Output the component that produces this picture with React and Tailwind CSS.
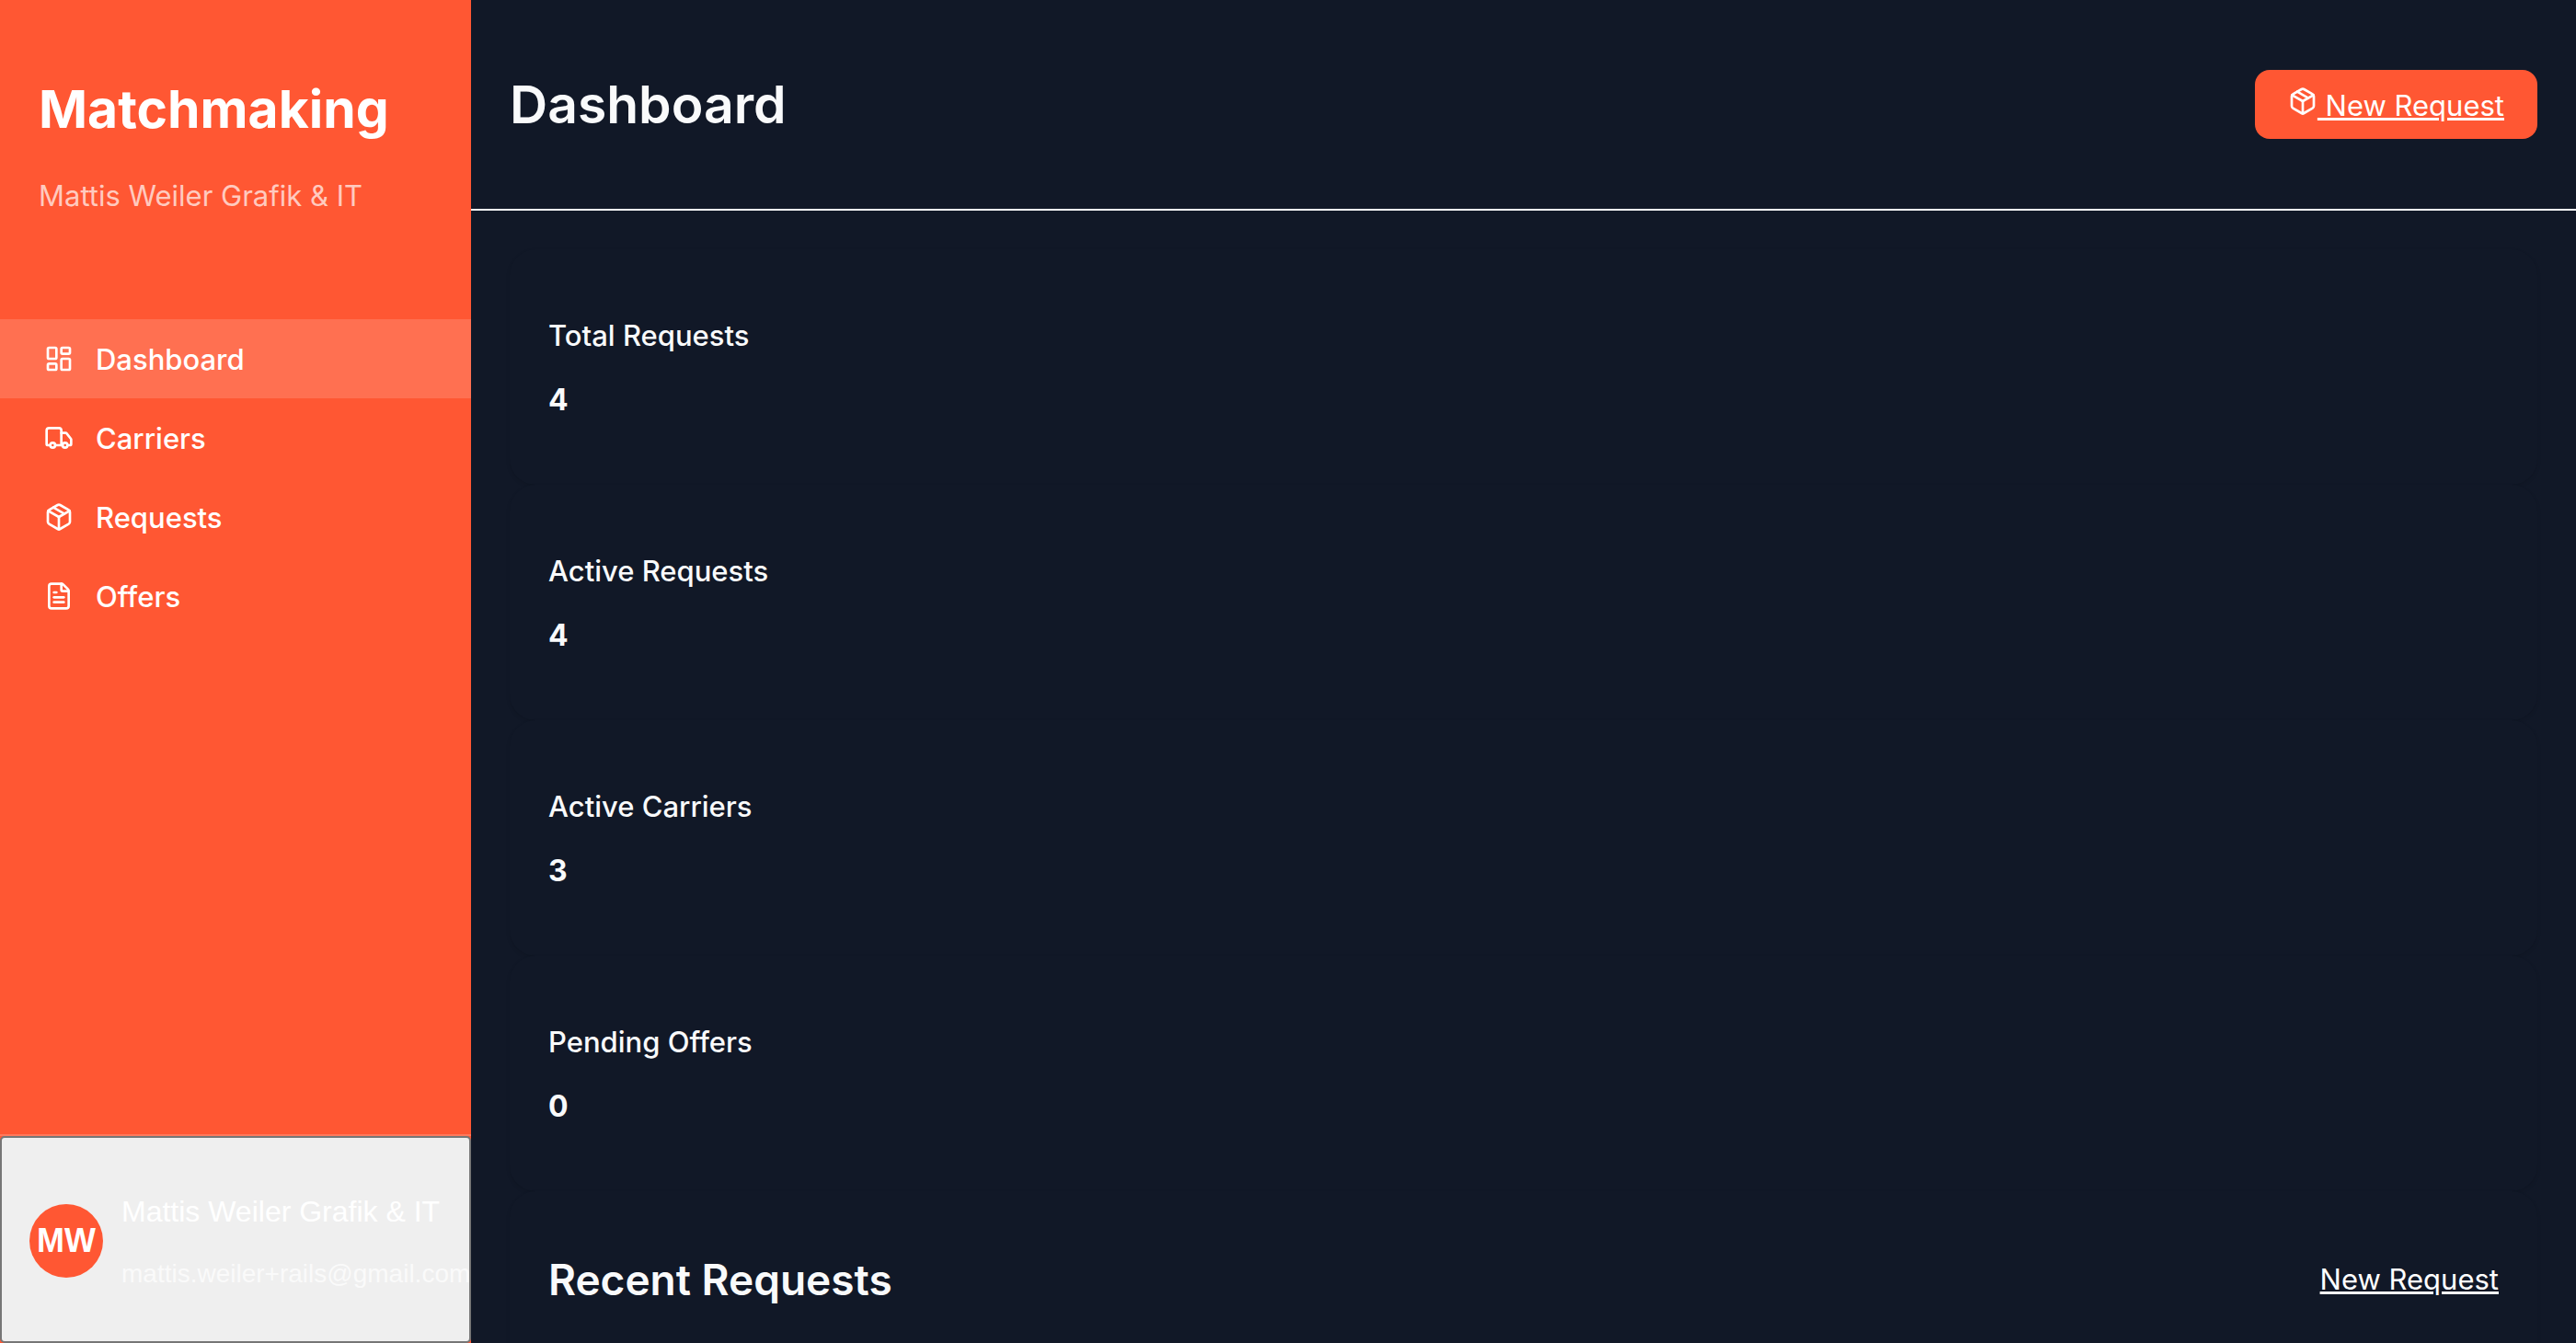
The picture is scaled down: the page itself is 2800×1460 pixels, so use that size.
import { LayoutDashboard, Truck, Package, FileText } from "lucide-react";

const navItems = [
  { label: "Dashboard", Icon: LayoutDashboard, active: true },
  { label: "Carriers", Icon: Truck },
  { label: "Requests", Icon: Package },
  { label: "Offers", Icon: FileText },
];

const stats = [
  { label: "Total Requests", value: 4 },
  { label: "Active Requests", value: 4 },
  { label: "Active Carriers", value: 3 },
  { label: "Pending Offers", value: 0 },
];

function Sidebar() {
  return (
    <aside className="sticky top-0 flex h-screen w-[512px] shrink-0 flex-col bg-[#ff5733] text-white">
      <div className="px-[42px] pt-[83px] pb-[110px]">
        <div className="text-[57px] leading-[72px] font-bold">Matchmaking</div>
        <p className="mt-[34px] leading-[48px] text-white/70">Mattis Weiler Grafik &amp; IT</p>
      </div>
      <nav className="flex flex-1 flex-col">
        {navItems.map(({ label, Icon, active }) => (
          <a
            key={label}
            href="#"
            aria-current={active ? "page" : undefined}
            className={
              active
                ? "flex h-[86px] items-center gap-6 bg-white/15 px-12 font-medium"
                : "flex h-[86px] items-center gap-6 px-12 font-medium"
            }
          >
            <Icon className="size-8" strokeWidth={2} />
            <span className="pt-0.5">{label}</span>
          </a>
        ))}
      </nav>
      <div className="border-t-2 border-white/20">
        <button
          type="button"
          className="flex h-[225px] w-full items-center gap-5 overflow-hidden rounded-[5px] border-2 border-[#767676] bg-[#efefef] px-[30px] pt-0.5 text-left font-['Liberation_Sans',Arial,sans-serif] text-white"
        >
          <span className="flex size-20 shrink-0 items-center justify-center rounded-full bg-[#ff5733] text-[36px] font-bold">
            MW
          </span>
          <span className="flex flex-col gap-6 whitespace-nowrap pt-0.5">
            <span className="text-[32px] leading-[46px]">Mattis Weiler Grafik &amp; IT</span>
            <span className="text-[28px] leading-[42px] text-white/70">mattis.weiler+rails@gmail.com</span>
          </span>
        </button>
      </div>
    </aside>
  );
}

export default function App() {
  return (
    <div className="flex h-screen overflow-hidden bg-[#111827] font-['Inter',sans-serif] text-[31px] text-[#f9fafb]">
      <Sidebar />
      <div className="flex min-w-0 flex-1 flex-col">
        <header className="flex h-[229px] shrink-0 items-center justify-between border-b-2 border-[#f9fafb] px-[42px]">
          <h1 className="text-[57px] leading-[72px] font-semibold">Dashboard</h1>
          <a
            href="#"
            className="rounded-2xl bg-[#ff5733] px-9 pt-[15px] pb-[13px] leading-[47px] text-white underline"
          >
            <Package className="inline size-8 align-baseline" strokeWidth={2} /> New Request
          </a>
        </header>
        <main className="flex-1 p-[42px]">
          {stats.map(({ label, value }) => (
            <section
              key={label}
              className="flex flex-col gap-[22px] rounded-[28px] bg-[#111827] px-[42px] pt-[70px] pb-[68px] leading-[48px] shadow-[0_2px_4px_rgba(0,0,0,0.1)]"
            >
              <h3 className="font-medium">{label}</h3>
              <p className="text-[32px] font-bold">{value}</p>
            </section>
          ))}
          <section className="rounded-[28px] bg-[#111827] p-[42px] shadow-[0_2px_4px_rgba(0,0,0,0.1)]">
            <div className="flex h-[108px] items-center justify-between">
              <h2 className="text-[46px] leading-[60px] font-semibold">Recent Requests</h2>
              <a href="#" className="text-white underline">New Request</a>
            </div>
          </section>
        </main>
      </div>
    </div>
  );
}
